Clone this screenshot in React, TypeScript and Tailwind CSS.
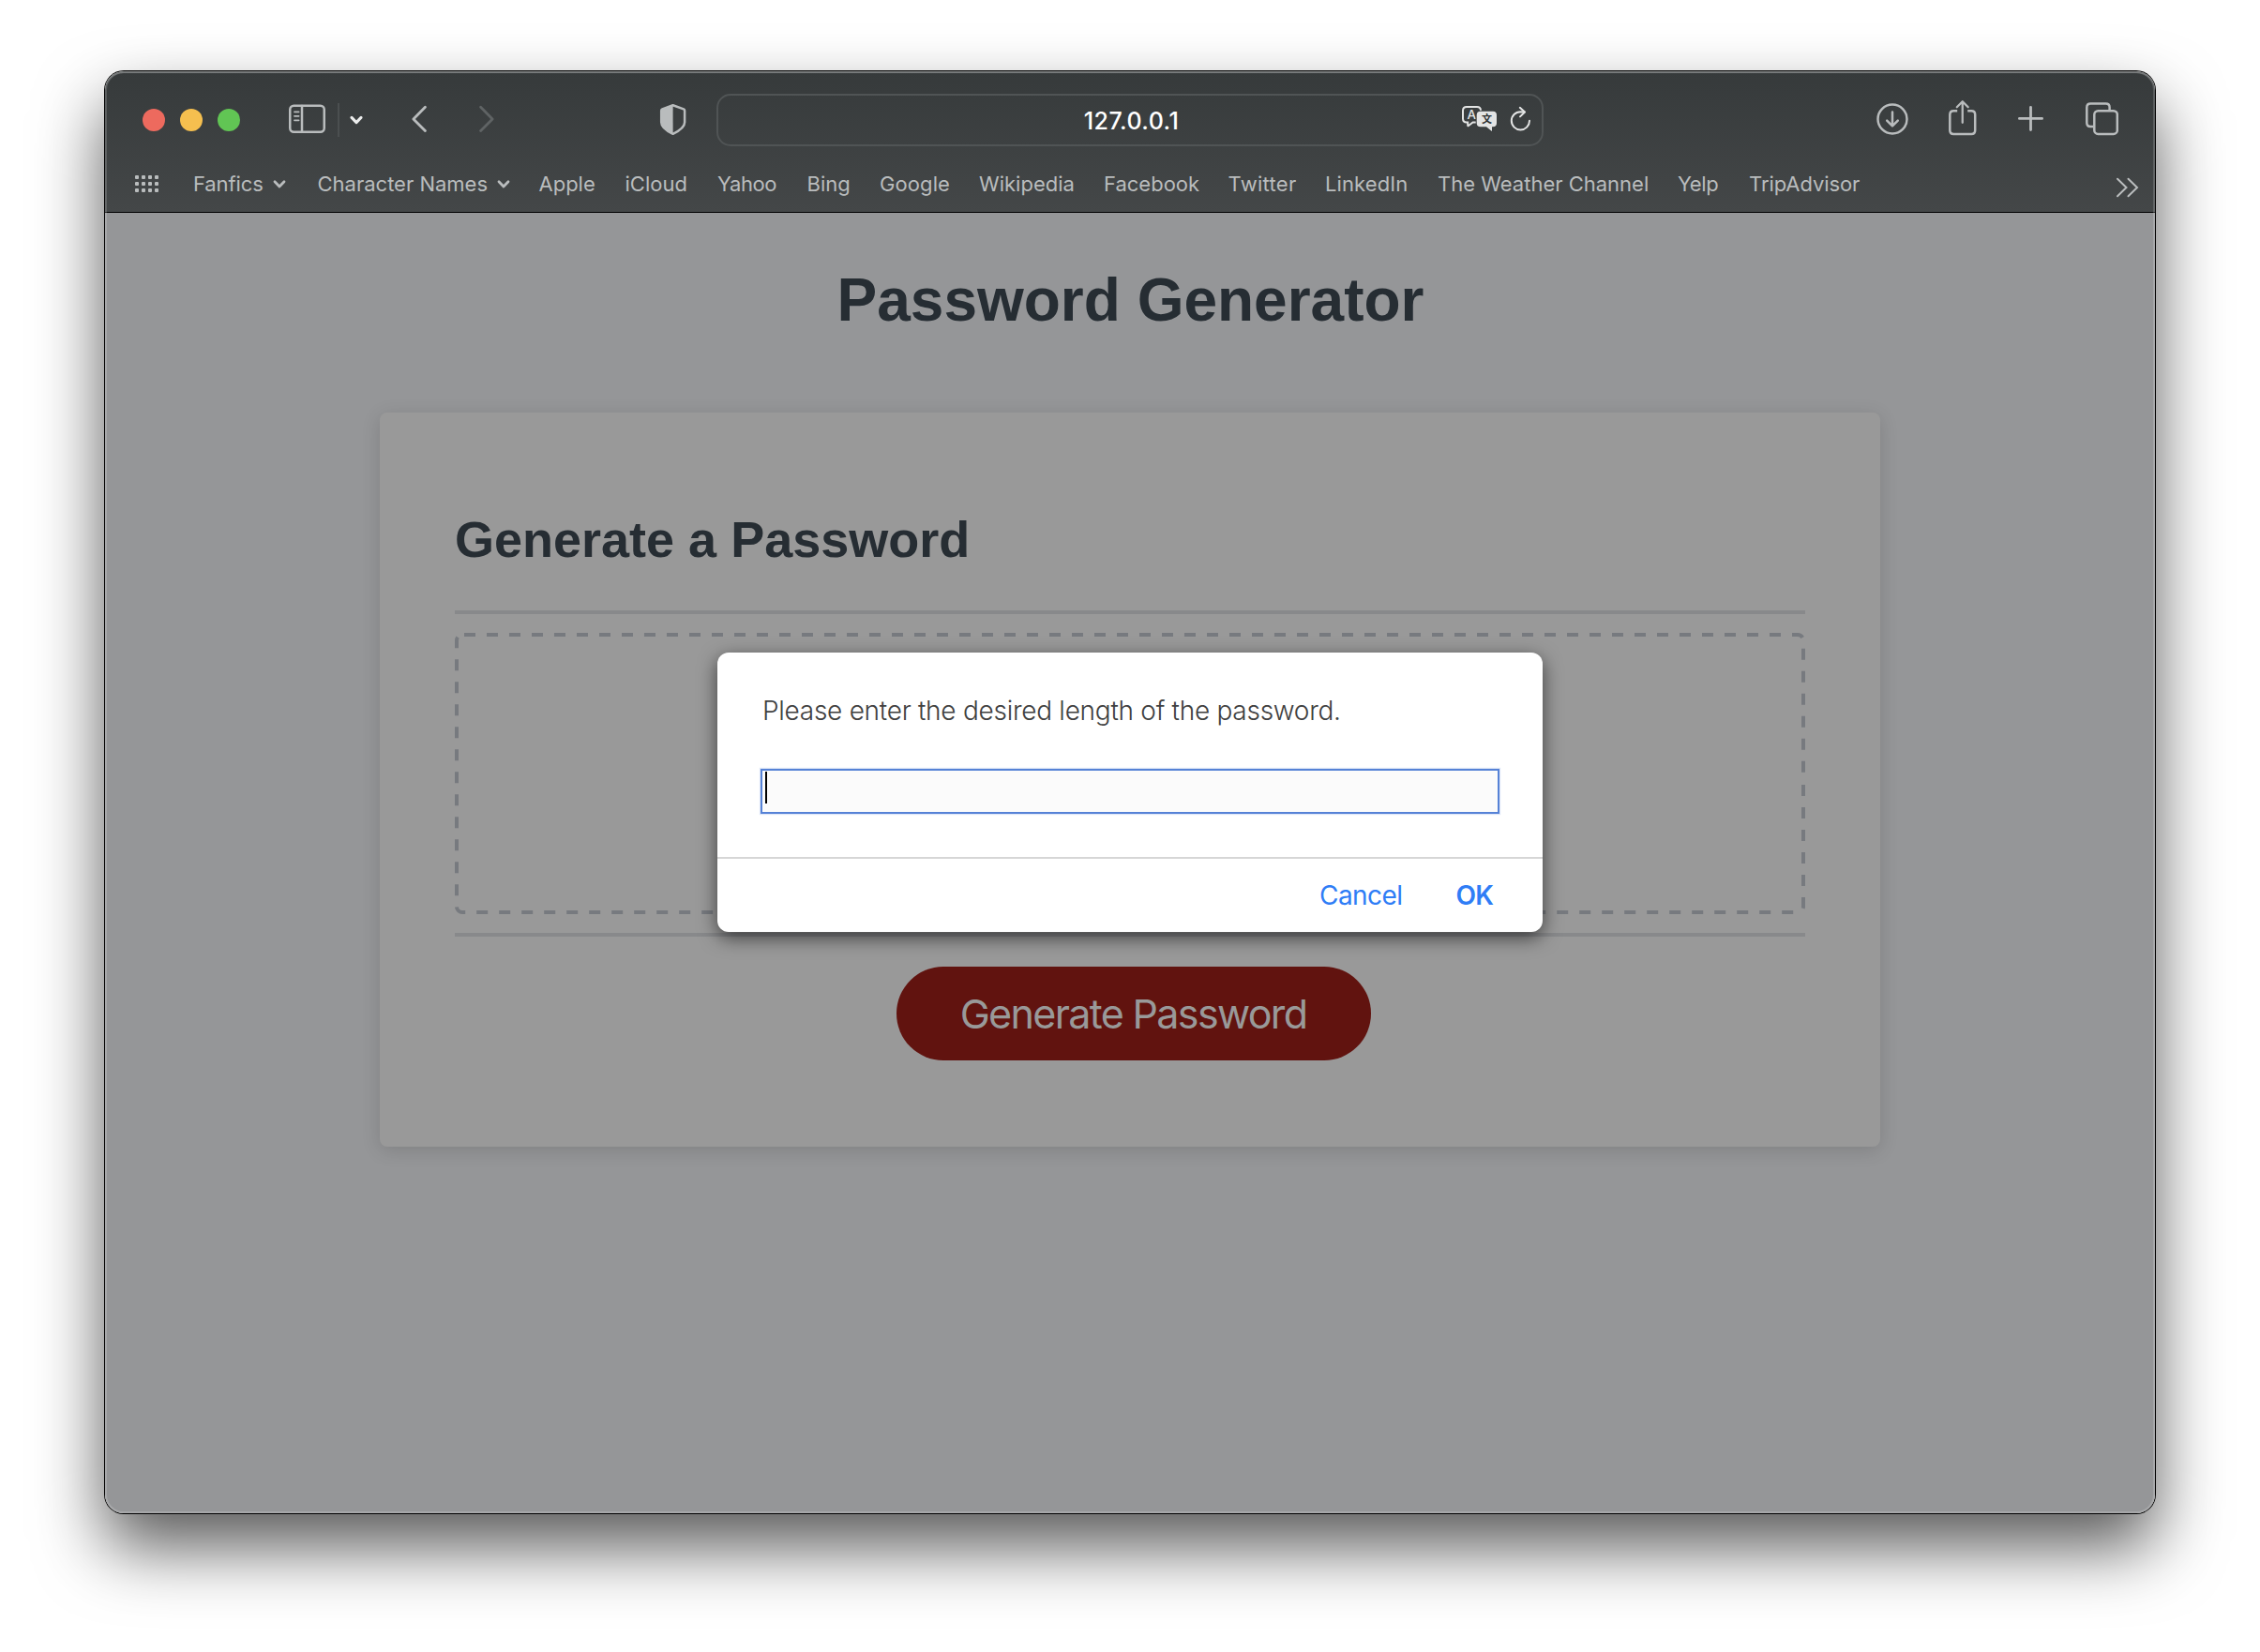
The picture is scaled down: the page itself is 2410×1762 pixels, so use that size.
import type { ReactNode } from "react";

type IconProps = { width: number; className?: string; strokeWidth?: number; children: ReactNode };

function ToolbarIcon({ width, className = "", strokeWidth = 2.5, children }: IconProps) {
  return (
    <svg
      width={width}
      height={44}
      viewBox={`0 0 ${width} 44`}
      fill="none"
      stroke="currentColor"
      strokeWidth={strokeWidth}
      strokeLinecap="round"
      strokeLinejoin="round"
      className={`shrink-0 ${className}`}
    >
      {children}
    </svg>
  );
}

function SmallChevron() {
  return (
    <svg width={14} height={32} viewBox="0 0 14 32" fill="none" stroke="currentColor" strokeWidth={2.8} strokeLinecap="round" strokeLinejoin="round" className="shrink-0">
      <path d="M2 13.8 L7 18.9 L12 13.8" />
    </svg>
  );
}

const bookmarks = [
  { label: "Fanfics", width: "w-[132.5px] tracking-[-0.1px]", menu: true },
  { label: "Character Names", width: "w-[236px]", menu: true },
  { label: "Apple", width: "w-[92px]" },
  { label: "iCloud", width: "w-[98.5px]" },
  { label: "Yahoo", width: "w-[95.5px] tracking-[-0.4px]" },
  { label: "Bing", width: "w-[77.5px]" },
  { label: "Google", width: "w-[106px] tracking-[0.1px]" },
  { label: "Wikipedia", width: "w-[133px]" },
  { label: "Facebook", width: "w-[132.5px]" },
  { label: "Twitter", width: "w-[103.5px] tracking-[0.3px]" },
  { label: "LinkedIn", width: "w-[120px] tracking-[0.1px]" },
  { label: "The Weather Channel", width: "w-[256px]" },
  { label: "Yelp", width: "w-[76px] tracking-[-0.4px]" },
  { label: "TripAdvisor", width: "w-[120px] tracking-[-0.08px]" },
];

function Toolbar() {
  return (
    <div className="flex h-[104px] items-center pl-10 text-[#b9bcbd]">
      <div className="flex shrink-0 gap-4">
        <span className="size-6 rounded-full bg-[#ed6a5e]" />
        <span className="size-6 rounded-full bg-[#f5bf4f]" />
        <span className="size-6 rounded-full bg-[#61c554]" />
      </div>
      <ToolbarIcon width={39} className="ml-[52px]">
        <rect x={1.25} y={6.75} width={36.5} height={28} rx={4} />
        <path d="M14 7V34.5" />
        <path d="M6 13.3H10.6M6 17.8H10.6M6 22.3H10.6" strokeWidth={1.8} />
      </ToolbarIcon>
      <span className="ml-[13px] h-9 w-0.5 shrink-0 bg-[#4b4f50]" />
      <ToolbarIcon width={14} className="ml-[11px] text-[#eceded]" strokeWidth={3}>
        <path d="M2 19.4 L7 24.6 L12 19.4" />
      </ToolbarIcon>
      <ToolbarIcon width={16} className="ml-[52px]" strokeWidth={2.8}>
        <path d="M14.4 8.2 L1.9 20.9 L14.4 33.6" />
      </ToolbarIcon>
      <ToolbarIcon width={16} className="ml-14 text-[#5f6364]" strokeWidth={2.8}>
        <path d="M1.6 8.2 L14.1 20.9 L1.6 33.6" />
      </ToolbarIcon>
      <ToolbarIcon width={29} className="ml-44">
        <path d="M14.6 6.3 L26 10.4 Q27.1 10.9 27.1 12 V24.5 C27.1 29.5 22.6 33 14.6 36.8 C6.6 33 2.2 29.5 2.2 24.5 V12 Q2.2 10.9 3.3 10.4 Z" />
        <path d="M14.6 6.3 L3.3 10.4 Q2.2 10.9 2.2 12 V24.5 C2.2 29.5 6.6 33 14.6 36.8 Z" fill="currentColor" stroke="none" />
      </ToolbarIcon>

      <div className="ml-8 grid h-14 w-[882px] shrink-0 grid-cols-[1fr_auto_1fr] items-center rounded-[15px] border-2 border-[#505455] text-[#e3e4e4]">
        <span />
        <span className="pt-0.5 pl-[3px] text-[25px] leading-8 font-medium tracking-[0.45px] text-white">127.0.0.1</span>
        <div className="flex items-center justify-end gap-[11px] pr-[11px]">
          <svg width={40} height={44} viewBox="0 0 40 44" className="shrink-0">
            <path
              d="M6 8H17Q21 8 21 12V20.5Q21 24.5 17 24.5H12.6L7.8 28.2Q7.2 28.5 7.2 27.8V24.5H6Q2 24.5 2 20.5V12Q2 8 6 8Z"
              fill="none"
              stroke="currentColor"
              strokeWidth={2}
            />
            <text x={11.4} y={20.8} textAnchor="middle" fontSize={13.5} fontWeight={500} fill="currentColor">A</text>
            <path
              d="M20.7 12.7H34Q38 12.7 38 16.7V25.3Q38 29.3 34 29.3H33V33.2Q33 34.2 32.2 33.5L27 29.3H20.7Q16.7 29.3 16.7 25.3V16.7Q16.7 12.7 20.7 12.7Z"
              fill="currentColor"
              stroke="#393d3e"
              strokeWidth={2}
              paintOrder="stroke"
            />
            <text x={27.4} y={25.4} textAnchor="middle" fontSize={11} fontWeight={700} fill="#2f3334" className="font-['Noto_Sans_CJK_SC',sans-serif]">文</text>
          </svg>
          <ToolbarIcon width={24} strokeWidth={2}>
            <path d="M22 22.8 A9.6 9.6 0 1 1 12.4 13.2 L16.6 13.4" />
            <path d="M11.8 8.8 L17 13.5 L12 18.4" />
          </ToolbarIcon>
        </div>
      </div>

      <ToolbarIcon width={34} className="ml-[355px]">
        <circle cx={17} cy={21} r={15.5} />
        <path d="M17 13.5V28M11.2 22.6L17 28.3L22.8 22.6" />
      </ToolbarIcon>
      <ToolbarIcon width={30} className="ml-[43px]">
        <path d="M9.2 12.2H5.3Q1.3 12.2 1.3 16.2V33Q1.3 37 5.3 37H24.2Q28.2 37 28.2 33V16.2Q28.2 12.2 24.2 12.2H20.2" strokeLinecap="butt" />
        <path d="M14.75 2.5V24.8M8.8 8.2L14.75 2.2L20.7 8.2" strokeWidth={2.3} />
      </ToolbarIcon>
      <ToolbarIcon width={27} className="ml-11" strokeWidth={2.8}>
        <path d="M1.4 20.4H25.6M13.5 8.3V32.6" />
      </ToolbarIcon>
      <ToolbarIcon width={35} className="ml-[45px]">
        <rect x={9.3} y={12.3} width={24.5} height={24.6} rx={4} />
        <path d="M25.6 11.5V8.6Q25.6 4.6 21.6 4.6H5.3Q1.3 4.6 1.3 8.6V25Q1.3 29 5.3 29H8.5" strokeLinecap="butt" />
      </ToolbarIcon>
    </div>
  );
}

function BookmarksBar() {
  return (
    <div className="flex h-[46px] items-start pr-[17px] pl-8 text-[22px] leading-8 text-[#b9bcbd]">
      <div className="mt-[7px] mr-[37px] grid w-[25px] shrink-0 grid-cols-4 gap-[3px]">
        {Array.from({ length: 12 }, (_, i) => (
          <span key={i} className="size-1 rounded-[1px] bg-[#b9bcbd]" />
        ))}
      </div>
      {bookmarks.map((b) => (
        <div key={b.label} className={`flex shrink-0 items-center gap-2.5 whitespace-nowrap ${b.width}`}>
          {b.label}
          {b.menu && <SmallChevron />}
        </div>
      ))}
      <svg width={25} height={32} viewBox="0 0 25 32" fill="none" stroke="currentColor" strokeWidth={2} strokeLinecap="round" className="ml-auto shrink-0">
        <path d="M2 10.7 L11.5 20 L2 29.3M13.5 10.7L23 20L13.5 29.3" />
      </svg>
    </div>
  );
}

function PromptDialog() {
  return (
    <div className="absolute inset-x-0 top-[469px] flex justify-center">
      <div className="h-[298px] w-[880px] rounded-xl bg-white shadow-[0_6px_20px_rgba(0,0,0,0.6)]">
        <div className="h-[220px] border-b-2 border-[#d6d6d6] px-[46px] pt-[42px]">
          <p className="pl-0.5 text-[28px] leading-10 font-light tracking-[-0.27px] text-[#404040]">
            Please enter the desired length of the password.
          </p>
          <div className="mt-[42px] h-12 border-2 border-[#5682d6] bg-[#fbfbfb] pt-px pl-[3px] shadow-[0_0_1px_1px_rgba(86,130,214,0.2)]">
            <span className="block h-[34px] w-0.5 bg-black" />
          </div>
        </div>
        <div className="flex h-[78px] items-center justify-end pr-[53px] text-[28px] leading-8 text-[#2f7df6]">
          <span className="tracking-[-0.55px]">Cancel</span>
          <span className="ml-[57px] font-semibold tracking-[-0.9px]">OK</span>
        </div>
      </div>
    </div>
  );
}

/** Output area with an evenly spaced 12px dash outline. */
function PasswordOutput() {
  return (
    <div className="relative h-[300px]">
      <svg width={1440} height={300} viewBox="0 0 1440 300" fill="none" stroke="#777a7f" strokeWidth={4} strokeDasharray="12 12" className="absolute inset-0">
        <path d="M10 2H1432A6 6 0 0 1 1438 8V150" />
        <path d="M1438 162V292A6 6 0 0 1 1432 298H8A6 6 0 0 1 2 292V8A6 6 0 0 1 8 2" />
      </svg>
    </div>
  );
}

function Page() {
  return (
    <main className="relative flex-1 bg-[#959698] text-[#262d33]">
      <h1 className="pt-[57px] pl-px text-center font-['Liberation_Sans',sans-serif] text-[64px] leading-[72px] font-bold">
        Password Generator
      </h1>
      <section className="mx-auto mt-[84px] h-[783px] w-[1600px] rounded-lg bg-[#999] px-20 pt-[103px] shadow-[0_4px_20px_rgba(0,0,0,0.14)]">
        <h2 className="font-['Liberation_Sans',sans-serif] text-[54px] leading-[64px] font-bold">
          Generate a Password
        </h2>
        <div className="mt-11 border-y-4 border-[#88898b] py-5">
          <PasswordOutput />
        </div>
        <div className="flex justify-center pt-8 pl-2">
          <button className="h-[100px] w-[506px] rounded-full bg-[#61130f] pr-px text-[43px] leading-none tracking-[-1.65px] text-[#999]">
            Generate Password
          </button>
        </div>
      </section>
      <PromptDialog />
    </main>
  );
}

export default function App() {
  return (
    <div className="h-[1762px] w-[2410px] overflow-hidden bg-white pt-[76px] pl-28 font-['Inter',sans-serif]">
      <div className="relative flex h-[1538px] w-[2186px] flex-col rounded-[20px] shadow-[0_0_0_1px_#000,0_36px_72px_rgba(0,0,0,0.65)]">
        <div className="flex flex-1 flex-col overflow-hidden rounded-[20px]">
          <header className="h-[151px] border-b border-black bg-linear-to-b from-[#363a3b] to-[#444748]">
            <Toolbar />
            <BookmarksBar />
          </header>
          <Page />
        </div>
        <div className="pointer-events-none absolute inset-0 rounded-[20px] shadow-[inset_0_0_0_2px_rgba(255,255,255,0.17),inset_0_2px_1px_rgba(255,255,255,0.2)]" />
      </div>
    </div>
  );
}
